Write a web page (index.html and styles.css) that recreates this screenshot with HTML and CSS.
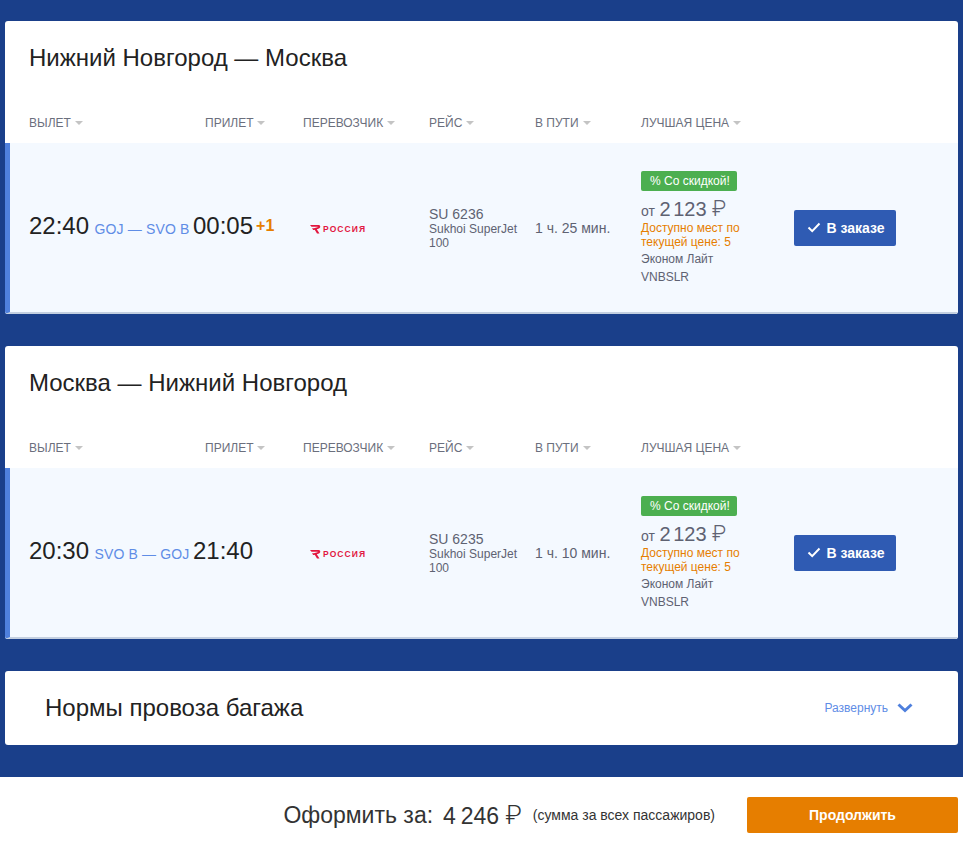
FILE: index.html
```html
<!DOCTYPE html>
<html lang="ru">
<head>
    <meta charset="UTF-8">
    <meta name="viewport" content="width=device-width, initial-scale=1.0">
    <title>Выбор рейса</title>
    <link rel="stylesheet" href="styles.css">
</head>
<body>
<svg class="sprite" width="0" height="0">
    <symbol id="logo-r" viewBox="0 0 11 10">
        <path d="M0 1h8.500c2 0 2.500 2.600.5 3.400L6.800 5.200 9.500 9.500H7L3.800 4.300 7.400 3.300C7.900 3.100 7.800 2.700 7.300 2.700H1.500z" fill="#e2173f"/>
        <path d="M2 4.200h2L5.200 6H3.200z" fill="#e2173f"/>
    </symbol>
</svg>

<div class="card">
    <h2 class="card-title">Нижний Новгород — Москва</h2>
    <div class="cols head">
        <div>ВЫЛЕТ<i class="caret"></i></div>
        <div>ПРИЛЕТ<i class="caret"></i></div>
        <div>ПЕРЕВОЗЧИК<i class="caret"></i></div>
        <div>РЕЙС<i class="caret"></i></div>
        <div>В ПУТИ<i class="caret"></i></div>
        <div>ЛУЧШАЯ ЦЕНА<i class="caret"></i></div>
    </div>
    <div class="cols flight">
        <div class="depart"><span class="time">22:40</span> <span class="route">GOJ — SVO B</span></div>
        <div class="arrive"><span class="time">00:05</span><span class="plus">+1</span></div>
        <div class="carrier">
            <svg class="logo-mark" width="11" height="10"><use href="#logo-r"/></svg><span class="logo-text">РОССИЯ</span>
        </div>
        <div class="trip"><div class="trip-no">SU 6236</div><div class="plane">Sukhoi SuperJet 100</div></div>
        <div class="duration">1 ч. 25 мин.</div>
        <div class="price">
            <div class="badge">% Со скидкой!</div>
            <div class="amount"><small>от</small> <span class="num">2 123</span> <span class="rub">₽</span></div>
            <div class="seats">Доступно мест по текущей цене: 5</div>
            <div class="fare">Эконом Лайт</div>
            <div class="fare">VNBSLR</div>
        </div>
        <div class="action">
            <button class="btn-order"><svg width="14" height="11" viewBox="0 0 14 11"><path d="M1.500 5.500l3.700 3.600 7.300-7.600" fill="none" stroke="#fff" stroke-width="2"/></svg>В заказе</button>
        </div>
    </div>
</div>

<div class="card">
    <h2 class="card-title">Москва — Нижний Новгород</h2>
    <div class="cols head">
        <div>ВЫЛЕТ<i class="caret"></i></div>
        <div>ПРИЛЕТ<i class="caret"></i></div>
        <div>ПЕРЕВОЗЧИК<i class="caret"></i></div>
        <div>РЕЙС<i class="caret"></i></div>
        <div>В ПУТИ<i class="caret"></i></div>
        <div>ЛУЧШАЯ ЦЕНА<i class="caret"></i></div>
    </div>
    <div class="cols flight">
        <div class="depart"><span class="time">20:30</span> <span class="route">SVO B — GOJ</span></div>
        <div class="arrive"><span class="time">21:40</span></div>
        <div class="carrier">
            <svg class="logo-mark" width="11" height="10"><use href="#logo-r"/></svg><span class="logo-text">РОССИЯ</span>
        </div>
        <div class="trip"><div class="trip-no">SU 6235</div><div class="plane">Sukhoi SuperJet 100</div></div>
        <div class="duration">1 ч. 10 мин.</div>
        <div class="price">
            <div class="badge">% Со скидкой!</div>
            <div class="amount"><small>от</small> <span class="num">2 123</span> <span class="rub">₽</span></div>
            <div class="seats">Доступно мест по текущей цене: 5</div>
            <div class="fare">Эконом Лайт</div>
            <div class="fare">VNBSLR</div>
        </div>
        <div class="action">
            <button class="btn-order"><svg width="14" height="11" viewBox="0 0 14 11"><path d="M1.500 5.500l3.700 3.600 7.300-7.600" fill="none" stroke="#fff" stroke-width="2"/></svg>В заказе</button>
        </div>
    </div>
</div>

<div class="card baggage">
    <h2 class="baggage-title">Нормы провоза багажа</h2>
    <a class="expand">Развернуть
        <svg width="16" height="10" viewBox="0 0 16 10"><path d="M1.500 1.500L8 7.500l6.500-6" fill="none" stroke="#4f80dd" stroke-width="3"/></svg>
    </a>
</div>

<div class="footer">
    <span class="total-label">Оформить за:</span>
    <span class="total"><span class="num">4 246</span> <span class="rub">₽</span></span>
    <span class="total-note">(сумма за всех пассажиров)</span>
    <button class="btn-next">Продолжить</button>
</div>
</body>
</html>
```

FILE: styles.css
```css
body {
    font-family: "Liberation Sans", Arial, sans-serif;
    background-color: #1a3f8a;
    color: #222;
    margin: 0;
    padding: 21px 5px 0;
}

.sprite {
    position: absolute;
}

.card {
    background-color: #fff;
    border-radius: 3px;
    margin-bottom: 32px;
    overflow: hidden;
}

.card-title {
    margin: 0;
    padding: 23px 24px 0;
    height: 57px;
    font-size: 24px;
    line-height: 28px;
    font-weight: normal;
}

.cols {
    display: grid;
    grid-template-columns: 176px 98px 126px 106px 106px 153px 1fr;
    padding-left: 24px;
}

.head {
    height: 42px;
    align-items: center;
    padding-top: 2px;
    box-sizing: border-box;
    font-size: 12px;
    color: #6b6f7d;
}

.caret {
    display: inline-block;
    margin-left: 4px;
    vertical-align: 2px;
    border-left: 4px solid transparent;
    border-right: 4px solid transparent;
    border-top: 4px solid #c4c4c4;
}

.flight {
    height: 171px;
    box-sizing: border-box;
    padding-left: 19px;
    align-items: center;
    background-color: #f4f9ff;
    border-left: 5px solid #4f80dd;
    border-bottom: 2px solid #c3cfe0;
}

.depart,
.arrive {
    white-space: nowrap;
    margin-top: -3px;
}

.arrive {
    margin-left: -12px;
}

.time {
    font-size: 24px;
    color: #222;
}

.route {
    margin-left: 1px;
    font-size: 14px;
    letter-spacing: 0.15px;
    color: #5f8de6;
}

.plus {
    font-size: 16px;
    font-weight: bold;
    color: #e67e00;
    margin-left: 3px;
    vertical-align: 3px;
}

.carrier {
    display: flex;
    align-items: center;
    padding-left: 7px;
    margin-top: 3px;
}

.logo-text {
    margin-left: 2px;
    font-size: 8.5px;
    font-weight: bold;
    letter-spacing: 1.1px;
    color: #e2173f;
}

.trip,
.duration {
    color: #5e6272;
    font-size: 14px;
}

.trip {
    margin-top: 2px;
}

.duration {
    margin-top: 1px;
}

.trip-no {
    line-height: 14px;
}

.plane {
    font-size: 12px;
    line-height: 14px;
    width: 96px;
    margin-top: 1px;
}

.price {
    font-size: 12px;
    color: #5e6272;
}

.badge {
    width: max-content;
    margin-top: 1px;
    padding: 0 7px 0 9px;
    height: 20px;
    line-height: 20px;
    background-color: #4caf50;
    border-radius: 2px;
    color: #fff;
}

.amount {
    font-size: 20px;
    line-height: 22px;
    margin-top: 7px;
    white-space: nowrap;
}

.amount small {
    font-size: 14px;
    margin-right: -1px;
}

.amount .num {
    word-spacing: -3px;
}

.rub {
    font-family: Roboto, sans-serif;
    font-weight: 300;
    font-size: 1.1em;
}

.seats {
    width: 110px;
    margin-top: -1px;
    line-height: 14px;
    color: #e67e00;
}

.fare {
    line-height: 18px;
    margin-top: 0;
}

.seats + .fare {
    margin-top: 1px;
}

.btn-order {
    display: flex;
    align-items: center;
    justify-content: center;
    gap: 5px;
    margin: 0;
    width: 102px;
    height: 36px;
    padding: 0 0 0 2px;
    border: none;
    border-radius: 2px;
    background-color: #2f5bb3;
    color: #fff;
    font-family: inherit;
    font-size: 14px;
    font-weight: bold;
}

.baggage {
    height: 74px;
    display: flex;
    align-items: center;
    justify-content: space-between;
    padding: 0 45px 0 40px;
}

.baggage-title {
    margin: 0;
    font-size: 24px;
    font-weight: normal;
}

.expand {
    display: flex;
    align-items: center;
    gap: 9px;
    font-size: 12px;
    color: #5f8de6;
}

.footer {
    margin: 0 -5px;
    height: 70px;
    padding: 6px 5px 0 0;
    box-sizing: border-box;
    background-color: #fff;
    display: flex;
    align-items: center;
    justify-content: flex-end;
}

.total-label,
.total {
    font-size: 23px;
    color: #333;
}

.total {
    margin-left: 10px;
}

.total .num {
    word-spacing: -1.5px;
}

.total-note {
    margin-left: 11px;
    font-size: 14px;
    color: #333;
}

.btn-next {
    margin-left: 32px;
    width: 211px;
    height: 36px;
    border: none;
    border-radius: 2px;
    background-color: #e67e00;
    color: #fff;
    font-family: inherit;
    font-size: 14px;
    font-weight: bold;
}
```
